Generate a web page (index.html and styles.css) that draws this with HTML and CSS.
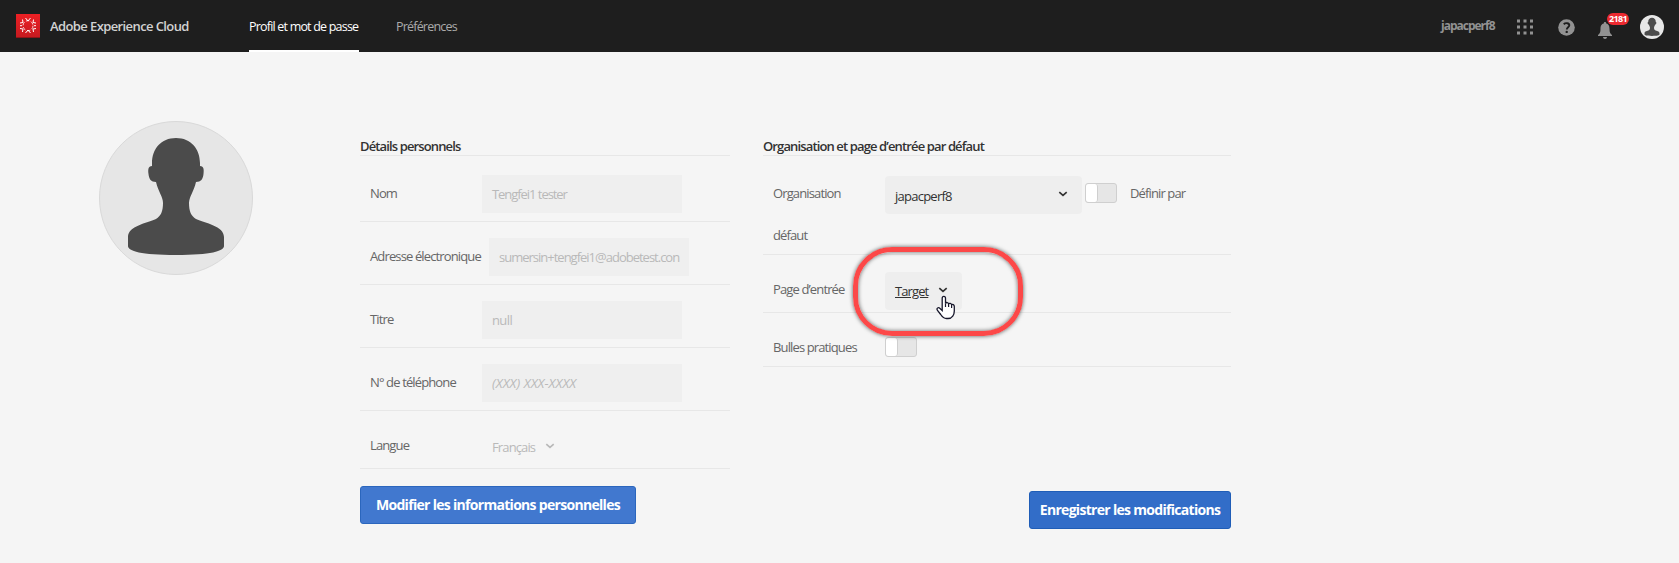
FILE: index.html
```html
<!DOCTYPE html>
<html lang="fr">
<head>
<meta charset="utf-8">
<title>Adobe Experience Cloud</title>
<link rel="stylesheet" href="styles.css">
</head>
<body>
<svg class="defs" aria-hidden="true">
  <symbol id="person" viewBox="0 0 154 154">
    <path d="M77 17C62 17 53 28 53 42V45C49 45 49 49 49.500 53C50 58 52 61 57 61C59 70 64 76 64 82C64 90 62 95 57 98C48 102 29 105 29 116V125C29 130 42 134 77 134S125 130 125 125V116C125 105 106 102 97 98C92 95 90 90 90 82C90 76 95 70 97 61C102 61 104 58 104.500 53C105 49 105 45 101 45V42C101 28 92 17 77 17Z" fill="#4b4b4b"/>
  </symbol>
  <symbol id="chevron" viewBox="0 0 10 6"><path d="M1.300 1.200L5 4.400L8.700 1.200" fill="none" stroke="currentColor" stroke-width="1.700"/></symbol>
</svg>
<header class="topbar">
  <svg class="logo" viewBox="0 0 24 24">
    <defs><linearGradient id="red" x1="0" y1="0" x2="0" y2="1"><stop offset="0" stop-color="#ed2024"/><stop offset="1" stop-color="#c41a20"/></linearGradient></defs>
    <rect width="24" height="24" fill="url(#red)"/><path d="M0 23.500H24" stroke="#8f1418"/>
    <g fill="none" stroke="#fff" stroke-width="1"><path d="M9.500 4L12 7L14.500 4M9.500 19L12 16L14.500 19M4 9L7 8.500L6.500 5.500M20 9L17 8.500L17.500 5.500M4 14.500L7 15L6.500 18M20 14.500L17 15L17.500 18M4 11.700H6M18 11.700H20"/><circle cx="12" cy="11.700" r="5" stroke-width=".8" stroke-dasharray="3.500 1.700"/></g>
  </svg>
  <span class="brand">Adobe Experience Cloud</span>
  <nav class="tabs">
    <a class="tab tab-active">Profil et mot de passe</a>
    <a class="tab tab-pref">Préférences</a>
  </nav>
  <span class="org-name">japacperf8</span>
  <svg class="apps" viewBox="0 0 17 16" fill="#929292"><path d="M0 .5h3v3H0zM6.500.5h3v3h-3zM13 .5h3v3h-3zM0 6.500h3v3H0zM6.500 6.500h3v3h-3zM13 6.500h3v3h-3zM0 12.500h3v3H0zM6.500 12.500h3v3h-3zM13 12.500h3v3h-3z"/></svg>
  <svg class="help" viewBox="0 0 17 17"><circle cx="8.500" cy="8.500" r="8.300" fill="#929292"/><path d="M5.700 5.200C7.500 3.600 11.300 3.800 11.300 6.300C11.300 8.200 8.800 8.300 8.800 10.500" fill="none" stroke="#1e1e1e" stroke-width="1.900"/><circle cx="8.700" cy="12.900" r="1.200" fill="#1e1e1e"/></svg>
  <div class="alerts">
    <svg class="bell" viewBox="0 0 14 17" fill="#929292"><path d="M7 0C8 0 8.200.7 8.200 1.500C11 2.200 11.500 4.500 11.500 7C11.500 10.500 12.300 11.500 14 13V14H0V13C1.700 11.500 2.500 10.500 2.500 7C2.500 4.500 3 2.200 5.800 1.500C5.800.7 6 0 7 0ZM5 15H9C9 17.500 5 17.500 5 15Z"/></svg>
    <span class="badge">2181</span>
  </div>
  <span class="mini-avatar"><svg><use href="#person"/></svg></span>
</header>
<main class="content">
  <div class="avatar"><svg><use href="#person"/></svg></div>
  <section class="personal">
    <h2 class="heading">Détails personnels</h2>
    <div class="row row-first"><label class="label">Nom</label><span class="field f-name">Tengfei1 tester</span></div>
    <div class="row"><label class="label">Adresse électronique</label><span class="field f-mail">sumersin+tengfei1@adobetest.con</span></div>
    <div class="row"><label class="label">Titre</label><span class="field">null</span></div>
    <div class="row"><label class="label">N° de téléphone</label><span class="field placeholder">(XXX) XXX-XXXX</span></div>
    <div class="row row-lang"><label class="label">Langue</label><span class="language">Français<svg class="chevron"><use href="#chevron"/></svg></span></div>
    <button class="button button-edit">Modifier les informations personnelles</button>
  </section>
  <section class="defaults">
    <h2 class="heading">Organisation et page d’entrée par défaut</h2>
    <div class="org-row">
      <div class="org-line"><span class="label">Organisation</span><span class="select select-org">japacperf8<svg class="chevron"><use href="#chevron"/></svg></span><span class="toggle"></span><span class="toggle-label">Définir par</span></div>
      <span class="label wrapped">défaut</span>
    </div>
    <div class="page-row">
      <span class="label">Page d’entrée</span><span class="select select-page"><u>Target</u><svg class="chevron"><use href="#chevron"/></svg></span>
      <div class="highlight"></div>
      <svg class="cursor" viewBox="0 0 20 25"><path d="M6.200 14V3.300C6.200.7 9.500.7 9.500 3.300V8.500C10 7 12.600 7.300 12.600 9C13.300 7.900 15.400 8.300 15.600 9.800C16.500 9 18.300 9.700 18.300 11.500V16C18.300 19.500 16.300 23.500 12 23.500H10.500C7.500 23.500 6 21.500 4.700 19.500L1.500 15.500C0 13 2.500 12 4 13.400L6.200 15.500Z" fill="#fff" stroke="#17172b" stroke-width="1.300"/><path d="M9.500 8.500V12M12.600 9V12M15.600 10V13" stroke="#17172b" stroke-width="1.200"/></svg>
    </div>
    <div class="tips-row"><span class="label">Bulles pratiques</span><span class="toggle"></span></div>
    <button class="button button-save">Enregistrer les modifications</button>
  </section>
</main>
</body>
</html>
```
FILE: styles.css
```css
* { box-sizing: border-box; }
body {
  margin: 0;
  height: 563px;
  overflow: hidden;
  background: #f5f5f5;
  color: #666;
  font: 13px/20px "Open Sans", "Noto Sans", sans-serif;
  letter-spacing: -.87px;
}
svg { display: block; flex: none; }
.defs { position: absolute; width: 0; height: 0; }

.topbar { display: flex; align-items: center; height: 52px; padding: 0 15px 0 16px; background: #1e1e1e; color: #aaa; }
.logo { width: 24px; height: 24px; }
.brand { width: 199px; padding-left: 10px; color: #d2d2d2; font-weight: 600; letter-spacing: -.6px; white-space: nowrap; }
.tabs { display: flex; gap: 37px; height: 52px; margin-left: 10px; }
.tab { height: 52px; font-size: 12.5px; line-height: 53px; white-space: nowrap; letter-spacing: -.8px; }
.tab-active { width: 110px; color: #fff; border-bottom: 2px solid #fff; }
.org-name { width: 54px; margin-left: auto; margin-right: 22px; font-size: 12px; font-weight: 700; color: #929292; letter-spacing: -1px; white-space: nowrap; }
.apps { width: 17px; height: 16px; margin-top: 1px; }
.help { width: 17px; height: 17px; margin: 2px 23px 0 24px; }
.alerts { position: relative; width: 14px; height: 17px; margin: 9px 28px 0 0; }
.bell { width: 14px; height: 17px; }
.badge { position: absolute; left: 9px; top: -9px; width: 22px; height: 12px; border-radius: 6px; background: #ec2a30; color: #fff; font-size: 9px; font-weight: 700; line-height: 12px; letter-spacing: -.7px; text-align: center; }
.mini-avatar { width: 24px; height: 24px; margin-top: 2px; border-radius: 50%; background: #e7e7e7; overflow: hidden; }
.mini-avatar svg { width: 24px; height: 24px; }

.content { display: flex; align-items: flex-start; padding: 69px 0 0 99px; }
.avatar { width: 154px; height: 154px; border: 1px solid #d9d9d9; border-radius: 50%; background: #e6e6e6; overflow: hidden; }
.avatar svg { width: 154px; height: 154px; margin: -1px; }
.personal { width: 370px; margin: 15px 0 0 107px; }
.defaults { width: 468px; margin: 15px 0 0 33px; }
.heading { margin: 0; height: 20px; border-bottom: 1px solid #e7e7e7; color: #323232; font-size: 13px; font-weight: 600; line-height: 21px; white-space: nowrap; }
.row { display: flex; align-items: center; height: 63px; padding: 8px 0 0 10px; border-bottom: 1px solid #e7e7e7; }
.row-first { height: 66px; padding-top: 11px; }
.row-lang { height: 58px; padding-top: 12px; }
.label { flex: none; width: 112px; white-space: nowrap; }
.row .label { margin-top: -2px; }
.field { width: 200px; height: 38px; padding: 0 10px; background: #efefef; color: #b9b9b9; line-height: 39px; letter-spacing: -.6px; white-space: nowrap; }
.f-name { letter-spacing: -1.05px; }
.f-mail { margin-left: 7px; letter-spacing: -1px; }
.placeholder { font-style: italic; letter-spacing: .1px; }
.language { display: flex; align-items: center; gap: 10px; padding: 3px 0 0 10px; color: #b9b9b9; }
.chevron { width: 10px; height: 6px; margin-top: -3px; }
.button { display: block; height: 38px; padding: 0; border: 1px solid #2b66bd; border-radius: 3px; color: #fff; font: 700 14px/36px "Open Sans", "Noto Sans", sans-serif; letter-spacing: -.7px; white-space: nowrap; }
.button-edit { width: 276px; margin-top: 17px; background: #4178cf; }
.button-save { width: 202px; margin: 124px 0 0 auto; background: #326dc8; border-color: #1f5db7; }

.org-row { height: 99px; padding: 20px 0 0 10px; border-bottom: 1px solid #e7e7e7; }
.org-line { display: flex; align-items: center; height: 38px; }
.org-line .label { margin-top: -5px; }
.wrapped { display: block; margin-top: 11px; }
.select { display: flex; align-items: center; height: 38px; padding: 1px 14px 0 10px; border-radius: 4px; background: #eee; color: #323232; letter-spacing: -.75px; }
.select-org { width: 197px; justify-content: space-between; }
.select-org, .org-line .toggle, .toggle-label { line-height: 18px; }
.select-page { width: 77px; gap: 10px; letter-spacing: -.9px; }
.toggle { width: 32px; height: 20px; border: 1px solid #cfcfcf; border-radius: 3px; background: #e6e6e6; }
.toggle::before { content: ""; display: block; width: 11px; height: 18px; border-right: 1px solid #cfcfcf; border-radius: 3px; background: #fff; }
.org-line .toggle { margin: -4px 13px 0 3px; }
.toggle-label { margin-top: -5px; }
.page-row { position: relative; display: flex; align-items: center; height: 58px; padding: 14px 0 0 10px; border-bottom: 1px solid #e7e7e7; }
.page-row .label { margin-top: -4px; }
.highlight { position: absolute; left: 90px; top: -8px; width: 170px; height: 89px; border: 5px solid #fc4848; border-radius: 39px; box-shadow: 0 0 4px rgba(0,0,0,.65), inset 0 0 4px rgba(0,0,0,.6); z-index: 1; }
.cursor { position: absolute; left: 173px; top: 40px; width: 20px; height: 25px; z-index: 2; }
.tips-row { display: flex; align-items: center; height: 54px; padding: 15px 0 0 10px; border-bottom: 1px solid #e7e7e7; }
.tips-row .toggle { margin-top: -1px; }
```
